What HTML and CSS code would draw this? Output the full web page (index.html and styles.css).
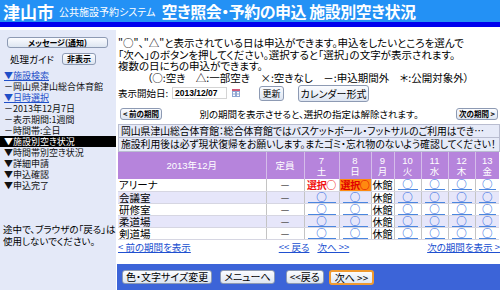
FILE: index.html
```html
<!DOCTYPE html>
<html lang="ja">
<head>
<meta charset="utf-8">
<title>施設別空き状況</title>
<link rel="stylesheet" href="styles.css">
</head>
<body>
<header class="top">
  <div class="title">
    <span class="city">津山市</span>
    <span class="sys">公共施設予約システム</span>
    <span class="page">空き照会・予約の申込 施設別空き状況</span>
  </div>
  <div class="stripe"></div>
</header>
<div class="layout">
  <aside class="side">
    <button class="btn msg">メッセージ(通知)</button>
    <div class="guide"><span>処理ガイド</span><button class="btn hide">非表示</button></div>
    <ul class="steps">
      <li><a class="lnk">▼施設検索</a></li>
      <li>－岡山県津山総合体育館</li>
      <li><a class="lnk">▼日時選択</a></li>
      <li>－2013年12月7日</li>
      <li>－表示期間:1週間</li>
      <li>－時間帯:全日</li>
      <li class="cur">▼施設別空き状況</li>
      <li>▼時間帯別空き状況</li>
      <li>▼詳細申請</li>
      <li>▼申込確認</li>
      <li>▼申込完了</li>
    </ul>
    <p class="warn">途中で、ブラウザの「戻る」は<br>使用しないでください。</p>
  </aside>
  <main class="main">
    <div class="content">
      <p class="intro">"○"、"△"と表示されている日は申込ができます。申込をしたいところを選んで<br>「次へ」のボタンを押してください。選択すると「選択」の文字が表示されます。<br>複数の日にちの申込ができます。</p>
      <p class="legend">（○:空き　△:一部空き　×:空きなし　－:申込期間外　＊:公開対象外）</p>
      <div class="daterow">
        <span class="dlabel">表示開始日:</span>
        <span class="dinput">2013/12/07</span>
        <svg class="cal" width="8" height="8" viewBox="0 0 8 8"><rect x="0" y="0" width="8" height="8" fill="#8fa6d2"/><rect x="0" y="0" width="8" height="2" fill="#d05a7a"/><rect x="1" y="3" width="2" height="1.5" fill="#fff"/><rect x="5" y="3" width="2" height="1.5" fill="#fff"/><rect x="1" y="5.5" width="2" height="1.5" fill="#fff"/><rect x="5" y="5.5" width="2" height="1.5" fill="#fff"/></svg>
        <button class="btn upd">更新</button>
        <button class="btn calv">カレンダー形式</button>
      </div>
      <div class="periodrow">
        <button class="btn per">&lt; 前の期間</button>
        <span class="pnote">別の期間を表示させると、選択の指定は解除されます。</span>
        <button class="btn per">次の期間 &gt;</button>
      </div>
      <div class="notice">岡山県津山総合体育館：総合体育館ではバスケットボール・フットサルのご利用はでき…</div>
      <div class="notice">施設利用後は必ず現状復帰をお願いします。またゴミ・忘れ物のないよう確認してください！</div>
      <table class="grid">
        <colgroup>
          <col class="c-name"><col class="c-cap"><col class="c-d7"><col class="c-d8"><col class="c-d9"><col class="c-d"><col class="c-d"><col class="c-d"><col class="c-d13">
        </colgroup>
        <thead>
          <tr><th>2013年12月</th><th>定員</th><th>7<br>土</th><th>8<br>日</th><th>9<br>月</th><th>10<br>火</th><th>11<br>水</th><th>12<br>木</th><th>13<br>金</th></tr>
        </thead>
        <tbody>
          <tr><td class="nm">アリーナ</td><td class="cap">－</td><td class="sel">選択○</td><td class="sel on">選択○</td><td class="cl">休館</td><td><a class="av">○</a></td><td><a class="av">○</a></td><td><a class="av">○</a></td><td><a class="av">○</a></td></tr>
          <tr class="alt"><td class="nm">会議室</td><td class="cap">－</td><td><a class="av">○</a></td><td><a class="av">○</a></td><td class="cl">休館</td><td><a class="av">○</a></td><td><a class="av">○</a></td><td><a class="av">○</a></td><td><a class="av">○</a></td></tr>
          <tr><td class="nm">研修室</td><td class="cap">－</td><td><a class="av">○</a></td><td><a class="av">○</a></td><td class="cl">休館</td><td><a class="av">○</a></td><td><a class="av">○</a></td><td><a class="av">○</a></td><td><a class="av">○</a></td></tr>
          <tr class="alt"><td class="nm">柔道場</td><td class="cap">－</td><td><a class="av">○</a></td><td><a class="av">○</a></td><td class="cl">休館</td><td><a class="av">○</a></td><td><a class="av">○</a></td><td><a class="av">○</a></td><td><a class="av">○</a></td></tr>
          <tr><td class="nm">剣道場</td><td class="cap">－</td><td><a class="av">○</a></td><td><a class="av">○</a></td><td class="cl">休館</td><td><a class="av">○</a></td><td><a class="av">○</a></td><td><a class="av">○</a></td><td><a class="av">○</a></td></tr>
        </tbody>
      </table>
      <div class="navrow">
        <a class="nl">&lt; 前の期間を表示</a>
        <span class="mid"><a class="nl">&lt;&lt; 戻る</a><a class="nl">次へ &gt;&gt;</a></span>
        <a class="nl">次の期間を表示 &gt;</a>
      </div>
    </div>
    <div class="bottombar">
      <button class="btn bb">色・文字サイズ変更</button>
      <button class="btn bb">メニューへ</button>
      <button class="btn bb back">&lt;&lt;戻る</button>
      <button class="btn bb next">次へ &gt;&gt;</button>
    </div>
  </main>
</div>
</body>
</html>
```

FILE: styles.css
```css
* { box-sizing: border-box; }
html, body { margin: 0; padding: 0; }
body {
  width: 500px;
  height: 290px;
  overflow: hidden;
  font-family: "Noto Sans CJK JP", "Noto Sans", sans-serif;
  font-feature-settings: "palt";
  color: #000;
  background: #fff;
  display: flex;
  flex-direction: column;
}
p, ul { margin: 0; padding: 0; }
a { cursor: pointer; }

.top { flex: none; }
.title {
  height: 22px;
  background: #2391f5;
  color: #fff;
  display: flex;
  align-items: center;
  padding-left: 3px;
  white-space: nowrap;
}
.title span { line-height: 1; }
.city { font-size: 17px; font-weight: bold; }
.sys { font-size: 10px; margin: 2px 6px 0 5px; }
.page { font-size: 16px; font-weight: bold; letter-spacing: -0.5px; }
.stripe { height: 5px; background: #0000ee; }

.layout { flex: 1; display: flex; padding-top: 3px; min-height: 0; }

.btn {
  font-family: inherit;
  font-feature-settings: "palt";
  color: #000;
  background: linear-gradient(#fbfcff, #dde5f1);
  border: 1px solid #8d9ab3;
  border-radius: 3px;
  padding: 0;
  margin: 0;
}

.side {
  width: 116px;
  flex: none;
  background: #e4e9f8;
  padding-top: 7px;
  font-size: 9px;
  line-height: 11px;
}
.msg {
  display: block;
  margin-left: 7px;
  width: 101px;
  height: 11px;
  font-size: 8px;
  line-height: 9px;
  font-weight: bold;
}
.guide {
  display: flex;
  align-items: center;
  margin-top: 5px;
  padding-left: 10px;
  height: 12px;
  font-size: 9.5px;
}
.hide {
  margin-left: 8px;
  width: 34px;
  height: 12px;
  font-size: 8px;
  line-height: 10px;
  font-weight: bold;
}
.steps { list-style: none; margin-top: 5px; }
.steps li { height: 11px; line-height: 11px; padding-left: 4px; white-space: nowrap; color: #111; }
.steps .lnk { color: #1f4fc8; text-decoration: underline; }
.steps .cur { background: #000; color: #fff; }
.warn { margin-top: 32px; padding-left: 3px; line-height: 12px; font-size: 9.5px; white-space: nowrap; }

.main { flex: 1; margin-left: 1px; display: flex; flex-direction: column; min-width: 0; }
.content { flex: 1; padding: 7px 0 0 1px; font-size: 10.5px; }
.intro { line-height: 11.5px; white-space: nowrap; }
.legend { line-height: 11.5px; padding-left: 29px; white-space: nowrap; }

.daterow { display: flex; align-items: center; height: 18px; margin-top: 1px; font-size: 9.5px; }
.dlabel { width: 54px; }
.dinput {
  width: 55px;
  height: 12px;
  line-height: 11px;
  border: 1px solid #d4d4d4;
  font-family: "Liberation Sans", sans-serif;
  font-weight: bold;
  font-size: 8.5px;
  padding-left: 2px;
}
.cal { margin-left: 5px; }
.upd { margin-left: 19px; width: 25px; height: 15px; font-size: 9px; line-height: 13px; }
.calv { margin-left: 14px; width: 71px; height: 17px; font-size: 10px; line-height: 15px; }

.periodrow {
  display: flex;
  align-items: center;
  justify-content: space-between;
  height: 12px;
  margin-top: 6px;
  padding: 0 2px 0 2px;
}
.per { width: 42px; height: 12px; font-size: 7.5px; line-height: 10px; font-weight: bold; }
.pnote { font-size: 9.5px; line-height: 12px; }

.notice {
  height: 14px;
  margin-top: 4px;
  line-height: 12px;
  background: #e6eaf8;
  border: 1px solid #b9bdd0;
  padding-left: 2px;
  white-space: nowrap;
  font-size: 9.8px;
}
.notice + .notice { margin-top: 0; border-top: none; }

.grid {
  width: 381px;
  table-layout: fixed;
  border-collapse: collapse;
  font-size: 10.5px;
}
.c-name { width: 148px; }
.c-cap { width: 38px; }
.c-d7 { width: 35px; }
.c-d8 { width: 32px; }
.c-d9 { width: 23px; }
.c-d { width: 27px; }
.c-d13 { width: 24px; }
.grid th {
  background: #b684dc;
  color: #fff;
  font-weight: normal;
  font-size: 9.5px;
  line-height: 11px;
  height: 27px;
  padding: 0;
  border-left: 1px solid #d5bdea;
  font-family: "Liberation Sans", "Noto Sans CJK JP", sans-serif;
}
.grid th:first-child { border-left: none; }
.grid td {
  height: 12px;
  padding: 0;
  line-height: 11px;
  text-align: center;
  border-left: 1px solid #c4c4c4;
  border-bottom: 1px solid #d6d6e2;
  white-space: nowrap;
}
.grid td:first-child { border-left: none; }
.grid tr.alt td { background: #e6e6fa; }
.grid td.nm { text-align: left; padding-left: 1px; }
.grid td.cap { color: #555; }
.grid td.sel { color: #f01010; font-weight: bold; background: #fff; font-size: 10px; letter-spacing: -0.3px; }
.grid td.sel.on { background: #ff8a10; color: #e00000; }
.grid tr td.cl { background: #fff; font-size: 10px; }
.av {
  display: block;
  margin: 0 3px;
  color: #1d5fe0;
  font-weight: bold;
  border-bottom: 1px solid #4a86e0;
  line-height: 10px;
}

.navrow {
  display: flex;
  justify-content: space-between;
  margin-top: 1px;
  font-size: 9.5px;
  line-height: 12px;
}
.nl { color: #2050d0; text-decoration: underline; }
.mid { display: flex; gap: 8px; margin-left: 70px; margin-right: 60px; }

.bottombar {
  flex: none;
  height: 26px;
  background: #3c64d8;
  display: flex;
  align-items: center;
  padding-left: 5px;
}
.bb { height: 14px; font-size: 10px; line-height: 12px; padding: 0 3px; }
.bb + .bb { margin-left: 8px; }
.bb.back { margin-left: 11px; }
.bb.next { margin-left: 5px; border: 2px solid #f09a30; height: 15px; padding: 0 4px; }
```
